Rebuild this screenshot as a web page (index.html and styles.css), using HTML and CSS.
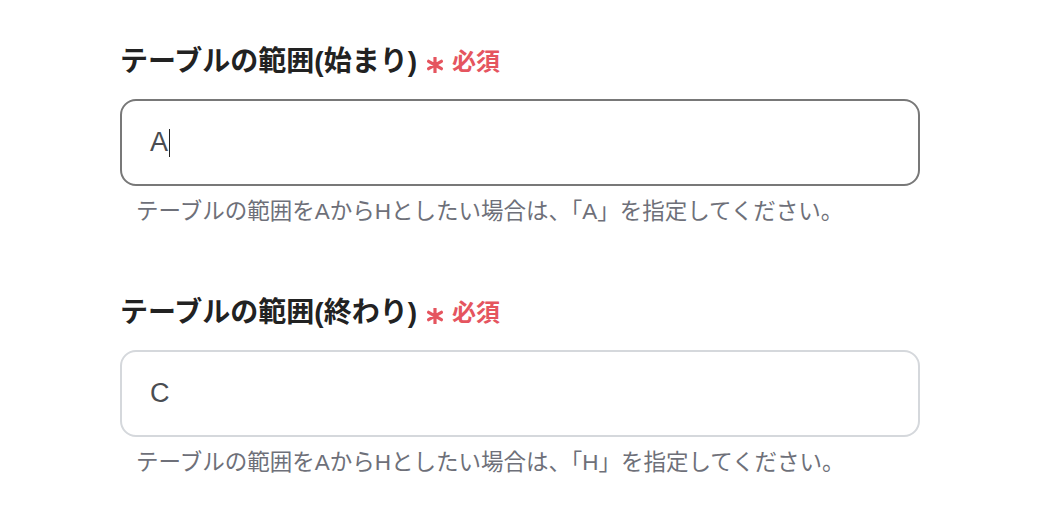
FILE: index.html
```html
<!DOCTYPE html>
<html>
<head>
    <title>テーブルの範囲</title>
    <link rel="stylesheet" href="styles.css">
</head>
<body>
    <div class="form">
        <div class="campo">
            <label class="rotulo">
                テーブルの範囲(始まり)
                <span class="obrigatorio">
                    <svg class="asterisco" viewBox="0 0 14 14"><path d="M7 0.5V13.5M1.4 3.75L12.6 10.25M1.4 10.25L12.6 3.75"/></svg>
                    必須
                </span>
            </label>
            <div class="entrada ativa">A<span class="cursor"></span></div>
            <p class="dica">テーブルの範囲をAからHとしたい場合は、「A」を指定してください。</p>
        </div>

        <div class="campo">
            <label class="rotulo">
                テーブルの範囲(終わり)
                <span class="obrigatorio">
                    <svg class="asterisco" viewBox="0 0 14 14"><path d="M7 0.5V13.5M1.4 3.75L12.6 10.25M1.4 10.25L12.6 3.75"/></svg>
                    必須
                </span>
            </label>
            <div class="entrada">C</div>
            <p class="dica">テーブルの範囲をAからHとしたい場合は、「H」を指定してください。</p>
        </div>
    </div>
</body>
</html>
```

FILE: styles.css
```css
body {
    margin: 0;
    background: #fff;
    font-family: "Liberation Sans", "Noto Sans CJK JP", sans-serif;
}

.form {
    width: 800px;
    margin-left: 120px;
    padding-top: 41px;
}

.campo {
    display: flex;
    flex-direction: column;
    margin-bottom: 64px;
}

.campo:last-child {
    margin-bottom: 0;
}

.rotulo {
    display: flex;
    align-items: center;
    font-size: 28px;
    font-weight: bold;
    line-height: 42px;
    color: #222;
}

.obrigatorio {
    display: flex;
    align-items: center;
    gap: 9px;
    margin-left: 10px;
    font-size: 24px;
    color: #e5555f;
}

.asterisco {
    width: 16px;
    height: 16px;
    margin-top: 5px;
    fill: none;
    stroke: #e5555f;
    stroke-width: 2.8;
    stroke-linecap: round;
}

.entrada {
    display: flex;
    align-items: center;
    box-sizing: border-box;
    height: 87px;
    margin-top: 16px;
    padding-left: 28px;
    border: 2px solid #d5d8dc;
    border-radius: 16px;
    font-size: 27px;
    color: #4a4d52;
}

.entrada.ativa {
    border-color: #787878;
}

.cursor {
    display: inline-block;
    width: 1px;
    height: 28px;
    margin-left: 1px;
    background: #222;
}

.dica {
    margin: 10px 0 0 16px;
    font-size: 22.5px;
    line-height: 32px;
    color: #6e7079;
}
```
